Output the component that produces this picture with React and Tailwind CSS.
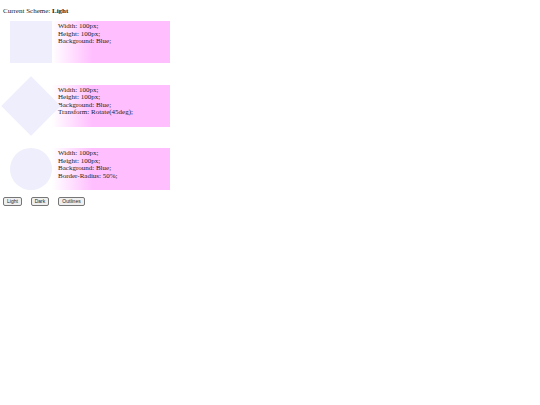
const shapes = [
  {
    kind: "square",
    lines: ["Width: 100px;", "Height: 100px;", "Background: Blue;"],
  },
  {
    kind: "diamond",
    lines: ["Width: 100px;", "Height: 100px;", "Background: Blue;", "Transform: Rotate(45deg);"],
  },
  {
    kind: "circle",
    lines: ["Width: 100px;", "Height: 100px;", "Background: Blue;", "Border-Radius: 50%;"],
  },
];

const Shape = ({ kind }) => {
  if (kind === "diamond") return <div className="w-[42px] h-[42px] shrink-0 bg-[#eeeefc] rotate-45" />;
  if (kind === "circle") return <div className="w-[42px] h-[42px] shrink-0 bg-[#eeeefc] rounded-full" />;
  return <div className="w-[42px] h-[42px] shrink-0 bg-[#eeeefc]" />;
};

export default function App() {
  return (
    <div className="w-[540px] h-[405px] bg-white pt-[7px] px-[3px] text-[#222] font-['Liberation_Serif',serif]">
      <div className="text-[7px] leading-[8px]">
        Current Scheme: <b>Light</b>
      </div>

      {/* shape rows */}
      <div className="flex flex-col gap-[21.5px] mt-[6px]">
        {shapes.map((s) => (
          <div
            key={s.kind}
            className="flex ml-[7px] w-[160px] h-[42px] bg-[linear-gradient(to_right,white_42px,#ffbfff_82px)]"
          >
            <Shape kind={s.kind} />
            <div className="pl-[6px] pt-[2px] text-[7px] leading-[7.5px]">
              {s.lines.map((l) => (
                <div key={l}>{l}</div>
              ))}
            </div>
          </div>
        ))}
      </div>

      <div className="flex gap-[9px] mt-[7px] font-['Liberation_Sans',sans-serif]">
        <button className="h-[9px] w-[19px] text-[5px] leading-none border border-[#767676] rounded-[2px] bg-[#efefef]">Light</button>
        <button className="h-[9px] w-[18px] text-[5px] leading-none border border-[#767676] rounded-[2px] bg-[#efefef]">Dark</button>
        <button className="h-[9px] w-[27px] text-[5px] leading-none border border-[#767676] rounded-[2px] bg-[#efefef]">Outlines</button>
      </div>
    </div>
  );
}
